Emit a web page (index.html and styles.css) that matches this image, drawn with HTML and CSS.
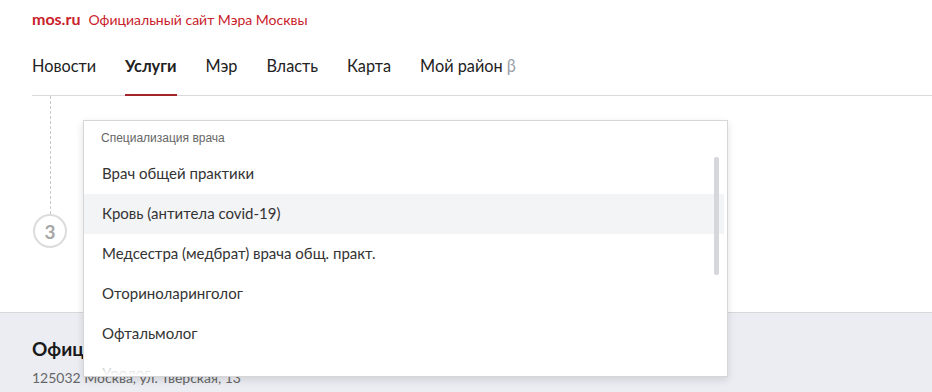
FILE: index.html
```html
<!DOCTYPE html>
<html lang="ru">

<head>
    <meta charset="UTF-8">
    <title>Официальный сайт Мэра Москвы</title>
    <link rel="stylesheet" href="styles.css">
</head>

<body>
    <div class="top">
        <a class="logo" href="#">mos.ru</a>
        <span class="slogan">Официальный сайт Мэра Москвы</span>
    </div>

    <ul class="nav">
        <li><a href="#">Новости</a></li>
        <li class="active"><a href="#">Услуги</a></li>
        <li><a href="#">Мэр</a></li>
        <li><a href="#">Власть</a></li>
        <li><a href="#">Карта</a></li>
        <li><a href="#">Мой район <span class="beta">β</span></a></li>
    </ul>

    <div class="main">
        <div class="steps">
            <div class="dash"></div>
            <div class="step-num">3</div>
        </div>

        <!-- выпадающий список -->
        <div class="dropdown">
            <div class="dropdown-title">Специализация врача</div>
            <ul class="options">
                <li>Врач общей практики</li>
                <li class="hover">Кровь (антитела covid-19)</li>
                <li>Медсестра (медбрат) врача общ. практ.</li>
                <li>Оториноларинголог</li>
                <li>Офтальмолог</li>
                <li>Уролог</li>
            </ul>
            <div class="scroll"></div>
        </div>
    </div>

    <div class="footer">
        <div class="footer-title">Официальный сайт Мэра Москвы</div>
        <div class="footer-addr">125032 Москва, ул. Тверская, 13</div>
    </div>
</body>

</html>
```

FILE: styles.css
```css
ul {
    padding: 0;
    margin: 0;
    list-style: none;
}

a {
    text-decoration: none;
    color: inherit;
}

body {
    margin: 0;
    font-family: Lato, "Open Sans", sans-serif;
    color: #222;
    background-color: #fff;
    overflow: hidden;
    height: 392px;
}

.top {
    padding: 9px 32px 0 32px;
    height: 23px;
    display: flex;
    align-items: baseline;
    color: #c9212b;
}

.top .logo {
    font-size: 16px;
    font-weight: 700;
    margin-right: 8px;
}

.top .slogan {
    font-size: 14px;
}

.nav {
    display: flex;
    margin: 24px 0 0 32px;
    border-bottom: 1px solid #dadada;
    height: 39px;
}

.nav li {
    margin-right: 29px;
    font-size: 16.3px;
    position: relative;
}

.nav li.active {
    font-weight: 700;
}

.nav li.active::after {
    content: "";
    position: absolute;
    left: 0;
    right: 0;
    bottom: -1px;
    height: 2px;
    background-color: #a3242a;
}

.nav .beta {
    color: #9aa0a8;
}

.main {
    position: relative;
    height: 216px;
    border-bottom: 1px solid #d8d8d8;
}

.steps {
    width: 34px;
    margin-left: 33px;
    display: flex;
    flex-direction: column;
    align-items: center;
}

.dash {
    height: 118px;
    border-left: 1px dashed #c8c8c8;
}

.step-num {
    width: 30px;
    height: 30px;
    border: 2px solid #dcdcdc;
    border-radius: 50%;
    display: flex;
    align-items: center;
    justify-content: center;
    font-size: 19px;
    font-weight: 700;
    color: #a7a7a7;
}

.dropdown {
    position: absolute;
    left: 83px;
    top: 24px;
    width: 643px;
    height: 255px;
    background-color: #fff;
    border: 1px solid #d6d6d6;
    box-shadow: 0 3px 8px rgba(0, 0, 0, 0.12);
    overflow: hidden;
    z-index: 2;
}

.dropdown-title {
    font-family: "Liberation Sans", Arial, sans-serif;
    font-size: 12px;
    color: #666;
    padding: 10px 0 0 17px;
    height: 23px;
}

.options li {
    height: 40px;
    line-height: 39px;
    padding-left: 18px;
    margin-right: 3px;
    font-size: 15px;
    color: #333;
}

.options li.hover {
    background-color: #f3f4f6;
}

.dropdown::after {
    content: "";
    position: absolute;
    left: 0;
    right: 0;
    bottom: 0;
    height: 22px;
    background: linear-gradient(rgba(255, 255, 255, 0.4), #fff);
}

.scroll {
    position: absolute;
    left: 630px;
    top: 36px;
    width: 5px;
    height: 118px;
    border-radius: 2px;
    background-color: #d5d7da;
}

.footer {
    background-color: #ebedf3;
    padding: 24px 32px 0 32px;
    height: 55px;
    overflow: hidden;
}

.footer-title {
    font-size: 19px;
    font-weight: 700;
    color: #1a1a1a;
}

.footer-addr {
    margin-top: 9px;
    font-size: 14px;
    color: #666;
}
```
